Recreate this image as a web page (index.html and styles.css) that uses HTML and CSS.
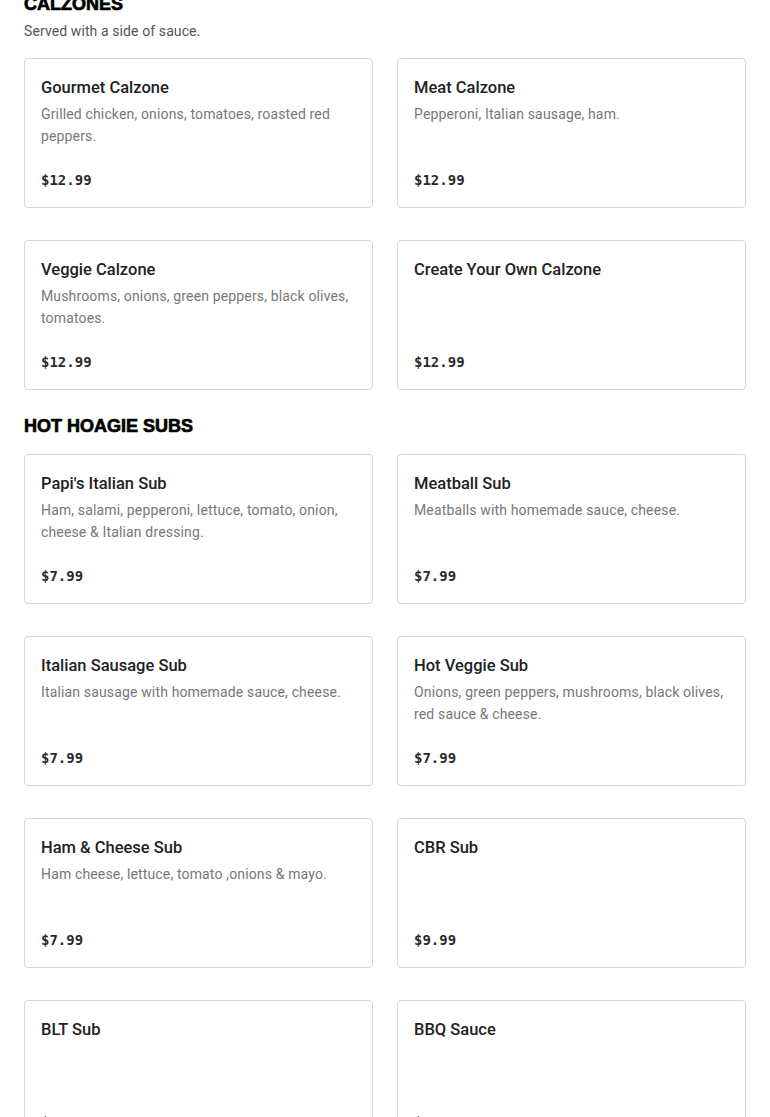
FILE: index.html
```html
<!DOCTYPE html>
<html lang="en">
<head>
<meta charset="utf-8">
<title>Menu</title>
<link rel="stylesheet" href="styles.css">
</head>
<body>
<main class="menu">
  <section class="section">
    <h2 class="section-title">CALZONES</h2>
    <p class="section-note">Served with a side of sauce.</p>
    <div class="grid">
      <div class="card">
        <h3 class="item-name">Gourmet Calzone</h3>
        <p class="item-desc">Grilled chicken, onions, tomatoes, roasted red peppers.</p>
        <div class="item-price">$12.99</div>
      </div>
      <div class="card">
        <h3 class="item-name">Meat Calzone</h3>
        <p class="item-desc">Pepperoni, Italian sausage, ham.</p>
        <div class="item-price">$12.99</div>
      </div>
      <div class="card">
        <h3 class="item-name">Veggie Calzone</h3>
        <p class="item-desc">Mushrooms, onions, green peppers, black olives, tomatoes.</p>
        <div class="item-price">$12.99</div>
      </div>
      <div class="card">
        <h3 class="item-name">Create Your Own Calzone</h3>
        <div class="item-price">$12.99</div>
      </div>
    </div>
  </section>
  <section class="section">
    <h2 class="section-title">HOT HOAGIE SUBS</h2>
    <div class="grid">
      <div class="card">
        <h3 class="item-name">Papi's Italian Sub</h3>
        <p class="item-desc">Ham, salami, pepperoni, lettuce, tomato, onion, cheese &amp; Italian dressing.</p>
        <div class="item-price">$7.99</div>
      </div>
      <div class="card">
        <h3 class="item-name">Meatball Sub</h3>
        <p class="item-desc">Meatballs with homemade sauce, cheese.</p>
        <div class="item-price">$7.99</div>
      </div>
      <div class="card">
        <h3 class="item-name">Italian Sausage Sub</h3>
        <p class="item-desc">Italian sausage with homemade sauce, cheese.</p>
        <div class="item-price">$7.99</div>
      </div>
      <div class="card">
        <h3 class="item-name">Hot Veggie Sub</h3>
        <p class="item-desc">Onions, green peppers, mushrooms, black olives, red sauce &amp; cheese.</p>
        <div class="item-price">$7.99</div>
      </div>
      <div class="card">
        <h3 class="item-name">Ham &amp; Cheese Sub</h3>
        <p class="item-desc">Ham cheese, lettuce, tomato ,onions &amp; mayo.</p>
        <div class="item-price">$7.99</div>
      </div>
      <div class="card">
        <h3 class="item-name">CBR Sub</h3>
        <div class="item-price">$9.99</div>
      </div>
      <div class="card">
        <h3 class="item-name">BLT Sub</h3>
        <div class="item-price">$7.99</div>
      </div>
      <div class="card">
        <h3 class="item-name">BBQ Sauce</h3>
        <div class="item-price">$0.99</div>
      </div>
    </div>
  </section>
</main>
</body>
</html>
```
FILE: styles.css
```css
* { box-sizing: border-box; }
html, body { margin: 0; padding: 0; background: #ffffff; }
body { font-family: "Roboto", "Liberation Sans", sans-serif; color: #222222; }
.menu {
  padding: 0 24px;
  margin-top: -8px;
  display: flex;
  flex-direction: column;
  gap: 24px;
}
.section { display: flex; flex-direction: column; }
.section-title {
  margin: 0;
  font-family: "Liberation Sans", Arial, sans-serif;
  font-weight: 900;
  font-size: 18px;
  line-height: 24px;
  color: #000000;
  -webkit-text-stroke: 0.7px #000000;
}
.section-note {
  margin: 4px 0 0;
  font-size: 14px;
  line-height: 22px;
  letter-spacing: 0.1px;
  color: #555555;
}
.grid {
  margin-top: 16px;
  display: grid;
  grid-template-columns: 1fr 1fr;
  column-gap: 24px;
  row-gap: 32px;
}
.card {
  min-height: 150px;
  border: 1px solid #d4d4d4;
  border-radius: 4px;
  padding: 16px;
  display: flex;
  flex-direction: column;
}
.item-name {
  margin: 0;
  font-size: 16.5px;
  line-height: 25px;
  font-weight: 500;
  color: #222222;
}
.item-desc {
  margin: 3px 0 0;
  font-size: 14px;
  line-height: 22px;
  letter-spacing: 0.15px;
  color: #777777;
}
.item-price {
  margin-top: auto;
  padding-top: 20px;
  font-family: "DejaVu Sans Mono", "Liberation Mono", monospace;
  font-weight: 700;
  font-size: 14px;
  line-height: 22px;
  color: #2a2a2a;
}
```
